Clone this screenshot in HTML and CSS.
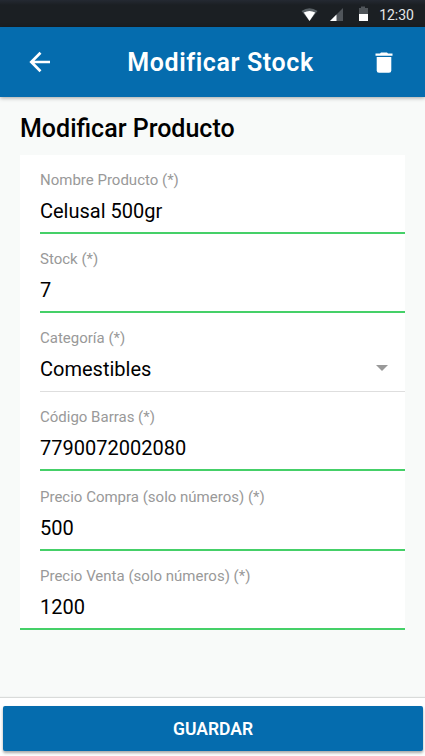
FILE: index.html
```html
<!DOCTYPE html>
<html lang="es">
<head>
<meta charset="utf-8">
<title>Modificar Stock</title>
<link rel="stylesheet" href="styles.css">
</head>
<body>
<div class="status">
  <svg class="status-icons" width="72" height="27" viewBox="0 0 72 27">
    <path d="M0.5 11Q8.5 5.5 16.5 11L8.5 21Z" fill="#596065"/>
    <path d="M2.8 12.5Q8.5 9.5 14.2 12.5L8.5 21Z" fill="#fff"/>
    <path d="M42 8V21H29Z" fill="#50555a"/>
    <path d="M35.5 14.5V21H29Z" fill="#fff"/>
    <path d="M58 8H60V6.5H64V8H67V14H58Z" fill="#50555a"/>
    <path d="M58 14H67V21H58Z" fill="#fff"/>
  </svg>
  <span class="clock">12:30</span>
</div>
<header class="toolbar">
  <svg class="back" width="22" height="22" viewBox="0 0 22 22"><path d="M21 11H2.5M11.5 1.8L2.3 11L11.5 20.2" fill="none" stroke="#fff" stroke-width="2.7"/></svg>
  <h1 class="title">Modificar Stock</h1>
  <svg class="trash" width="18" height="21" viewBox="0 0 18 21"><path d="M0.5 1.4H5L6 0.5H12L13 1.4H17.5V3.8H0.5Z" fill="#fff"/><path d="M1.7 5H16.3V18.5Q16.3 20.7 14 20.7H4Q1.7 20.7 1.7 18.5Z" fill="#fff"/></svg>
</header>
<main class="content">
  <h2 class="heading">Modificar Producto</h2>
  <form class="card">
    <div class="item"><span class="label">Nombre Producto (*)</span><span class="value">Celusal 500gr</span></div>
    <div class="item"><span class="label">Stock (*)</span><span class="value">7</span></div>
    <div class="item item-select"><span class="label">Categoría (*)</span><span class="value">Comestibles<i class="caret"></i></span></div>
    <div class="item"><span class="label">Código Barras (*)</span><span class="value">7790072002080</span></div>
    <div class="item item-tall"><span class="label">Precio Compra (solo números) (*)</span><span class="value">500</span></div>
    <div class="item item-last"><span class="label">Precio Venta (solo números) (*)</span><span class="value">1200</span></div>
  </form>
</main>
<footer class="footer"><button class="save" type="button">GUARDAR</button></footer>
</body>
</html>
```
FILE: styles.css
```css
* { box-sizing: border-box; }
body {
  margin: 0;
  height: 756px;
  display: flex;
  flex-direction: column;
  overflow: hidden;
  background: #f8faf9;
  font-family: Roboto, "Liberation Sans", sans-serif;
  color: #000;
}
.status {
  height: 27px;
  flex: none;
  display: flex;
  justify-content: flex-end;
  padding-right: 11px;
  background: linear-gradient(#242932, #1b1f23 5px);
}
.status-icons { margin-right: 6px; }
.clock {
  font-size: 14px;
  line-height: 30px;
  color: #e4e6e7;
}
.toolbar {
  height: 70px;
  flex: none;
  display: flex;
  align-items: center;
  justify-content: space-between;
  padding: 0 32px 0 29px;
  background: #056cae;
  box-shadow: 0 1px 4px rgba(0, 0, 0, .35);
}
.title {
  margin: 2px 0 0 15px;
  font-size: 25px;
  font-weight: 600;
  line-height: 30px;
  letter-spacing: .6px;
  color: #fff;
}
.content {
  flex: 1;
  padding: 17px 20px 0;
}
.heading {
  margin: 0 0 11px;
  font-size: 25px;
  line-height: 30px;
  font-weight: 500;
}
.card { background: #fff; }
.item {
  height: 79px;
  margin-left: 20px;
  padding-top: 15px;
  border-bottom: 2px solid #45d068;
}
.item-select { border-bottom: 1px solid #dedede; }
.item-tall { height: 80px; padding-top: 16px; }
.item-last { margin-left: 0; padding-left: 20px; }
.label {
  display: block;
  font-size: 15px;
  line-height: 20px;
  color: #999;
}
.value {
  display: flex;
  justify-content: space-between;
  align-items: center;
  margin-top: 9px;
  font-size: 20px;
  line-height: 24px;
}
.caret {
  margin: -2px 17px 0 0;
  border: 6px solid transparent;
  border-top-color: #999;
  border-bottom: 0;
}
.footer {
  height: 58px;
  flex: none;
  padding: 8px 2px 0 3px;
  background: #fff;
  box-shadow: 0 -1px 1px rgba(0, 0, 0, .12);
}
.save {
  display: block;
  width: 100%;
  height: 45px;
  padding: 1px 0 0;
  border: 0;
  border-radius: 2px;
  background: #056cae;
  box-shadow: 0 2px 3px rgba(0, 0, 0, .35);
  color: #fff;
  font: 600 17.5px/44px Roboto, "Liberation Sans", sans-serif;
}
```
